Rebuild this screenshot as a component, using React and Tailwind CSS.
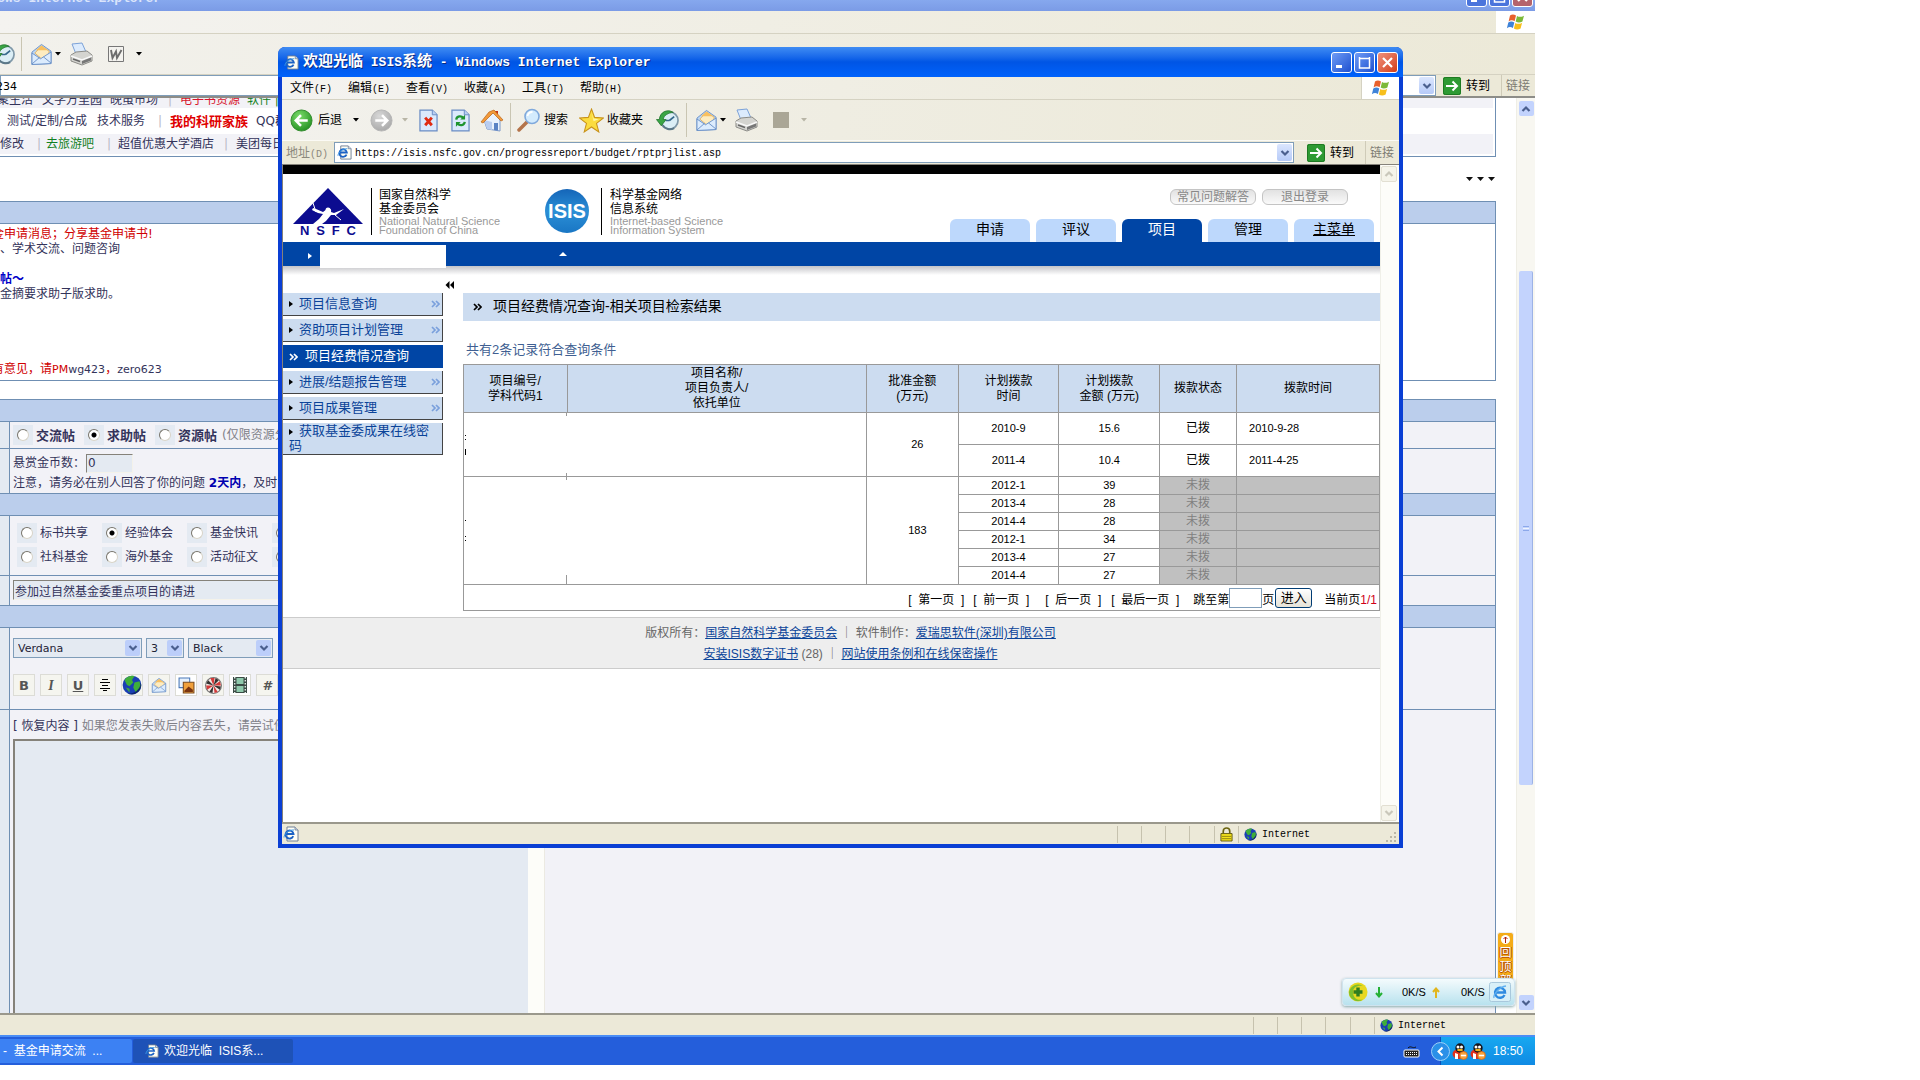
import React from "react";

const SANS = "font-['Liberation_Sans','Noto_Sans_CJK_SC',sans-serif]";
const MONO = "font-['Liberation_Mono','Noto_Sans_CJK_SC',monospace]";
const VERD = "font-['DejaVu_Sans','Noto_Sans_CJK_SC',sans-serif]";

/* ---------- icons ---------- */
const IePage = ({ className }) => (
  <svg viewBox="0 0 16 16" className={className} aria-hidden="true">
    <path d="M4 1h8l3 3v11H4z" fill="#fffef4" stroke="#6f7f95" />
    <path d="M12 1v3h3" fill="#cfd8e6" stroke="#6f7f95" strokeWidth=".8" />
    <path d="M10.2 10.2A4 4 0 1 1 10.5 8H3.4" fill="none" stroke="#1c62c4" strokeWidth="1.9" />
    <path d="M1 11.5C1 8 6 3.5 11 4" fill="none" stroke="#3d9be8" strokeWidth="1" />
  </svg>
);
const Flag = ({ className }) => (
  <svg viewBox="0 0 20 18" className={className} aria-hidden="true">
    <path d="M4 2.5c2-1.4 4-1.3 6 0L8.6 8.2c-2-1.2-4-1.2-6 .2z" fill="#e8602c" />
    <path d="M11 3c2 1.2 4.400 1.200 7-.3l-1.600 5.800c-2.400 1.500-4.600 1.400-6.700.1z" fill="#7cb938" />
    <path d="M2.300 9.500c2-1.400 4-1.300 6-.1L6.900 15c-2-1.200-4-1.200-6 .2z" fill="#3f83d8" />
    <path d="M9.300 10c2 1.200 4.400 1.200 6.800-.3L14.600 15.500c-2.400 1.500-4.600 1.400-6.700.1z" fill="#f7bf1c" />
  </svg>
);
const BackIcon = ({ off }) => (
  <svg viewBox="0 0 24 24" className="size-[23px] shrink-0" aria-hidden="true">
    <defs>
      <radialGradient id={off ? "gOff" : "gOn"} cx=".4" cy=".3" r=".8">
        <stop offset="0" stopColor={off ? "#d8d8d8" : "#7bdc6a"} />
        <stop offset="1" stopColor={off ? "#a4a4a4" : "#1c8a1c"} />
      </radialGradient>
    </defs>
    <circle cx="12" cy="12" r="11" fill={off ? "url(#gOff)" : "url(#gOn)"} stroke={off ? "#b5b5b5" : "#2f8a2b"} />
    <path d={off ? "M5.500 12h12M12.500 6.500l5.500 5.500-5.500 5.500" : "M18.500 12h-12M11.500 6.500L6 12l5.500 5.500"} fill="none" stroke="#fff" strokeWidth="2.600" />
  </svg>
);
const PageIcon = ({ kind }) => (
  <svg viewBox="0 0 20 24" className="h-[23px] w-[19px] shrink-0" aria-hidden="true">
    <path d="M1 1h13l5 5v17H1z" fill="#dbe9fc" stroke="#6a8cc4" strokeWidth="1.300" />
    <path d="M14 1v5h5" fill="#b9cff2" stroke="#6a8cc4" />
    {kind === "stop" ? (
      <path d="M6.500 9l7 8M13.500 9l-7 8" stroke="#e02a12" strokeWidth="3" />
    ) : (
      <g fill="none" stroke="#1f9430" strokeWidth="2.400">
        <path d="M5.500 11c.5-4 5.500-4.500 7.500-1.500" />
        <path d="M14.500 13.500c-.5 4-5.500 4.500-7.500 1.500" />
        <path d="M14.800 6v5h-5zM5.200 18.500v-5h5z" fill="#1f9430" stroke="none" />
      </g>
    )}
  </svg>
);
const HomeIcon = () => (
  <svg viewBox="0 0 24 24" className="size-[24px] shrink-0" aria-hidden="true">
    <path d="M15 3h3v5h-3z" fill="#c7311a" />
    <path d="M4 12l3 9 13 2V12l-6-8z" fill="#e9f1fd" stroke="#7c98c8" />
    <path d="M4 12l3 9 5 1v-8z" fill="#b9cdf0" />
    <path d="M1 14L9 4l5-2 9 10-2 1-8-8-10 10z" fill="#f29a3a" stroke="#b9641a" strokeWidth=".7" />
    <path d="M14 15h4v7.500l-4-.5z" fill="#5a82c4" />
  </svg>
);
const SearchIcon = () => (
  <svg viewBox="0 0 24 24" className="size-[24px] shrink-0" aria-hidden="true">
    <path d="M2 22l8-8" stroke="#b4744a" strokeWidth="3.500" strokeLinecap="round" />
    <circle cx="15" cy="8.500" r="7" fill="#d3ebfd" stroke="#7fa9dc" strokeWidth="1.600" />
    <path d="M10.500 8a5 5 0 0 1 5-4" fill="none" stroke="#fff" strokeWidth="1.800" />
  </svg>
);
const StarIcon = () => (
  <svg viewBox="0 0 24 24" className="size-[25px] shrink-0" aria-hidden="true">
    <path d="M12 1l3 8 8.500.5-6.700 5.300L19 23l-7-4.800L5 23l2.200-8.200L.5 9.500 9 9z" fill="#fbdc3e" stroke="#c8921a" />
    <path d="M12 4l2 6 5 .8-5 2z" fill="#fff3a0" />
  </svg>
);
const HistoryIcon = () => (
  <svg viewBox="0 0 24 24" className="size-[23px] shrink-0" aria-hidden="true">
    <circle cx="14" cy="12" r="9" fill="#dbeef6" stroke="#7f98a8" strokeWidth="1.800" />
    <path d="M14 12l5-4M14 12h-4" stroke="#35688c" strokeWidth="1.800" />
    <path d="M18 3.500C12-.5 4 3 3.500 11H.5l5 6.500 5-6.500h-3C8 6.500 13 4 18 3.500z" fill="#3aa545" stroke="#1d7028" strokeWidth=".8" />
    <path d="M7 17a9 9 0 0 0 12 3" fill="none" stroke="#5c7888" strokeWidth="2" />
  </svg>
);
const MailIcon = ({ className }) => (
  <svg viewBox="0 0 22 24" className={className} aria-hidden="true">
    <path d="M1 10L11 2l10 7v13L1 23z" fill="#bcd8f6" stroke="#6d93c8" />
    <path d="M4 11l7-7 8 5-1 6-7 2z" fill="#fdecc0" stroke="#e0a850" strokeWidth=".8" />
    <path d="M5 8l6-5 7 5z" fill="#f8c060" />
    <path d="M1 11l9 6 11-7v12L1 23z" fill="#dcecfd" stroke="#6d93c8" />
    <path d="M1 22.500l8-7M21 21.500l-8-6.500" stroke="#6d93c8" />
  </svg>
);
const PrintIcon = () => (
  <svg viewBox="0 0 24 24" className="size-[24px] shrink-0" aria-hidden="true">
    <path d="M3 2l10-1 4 9-10 2z" fill="#dcebfd" stroke="#7ca2d8" />
    <path d="M2 13l5-3 11-1 5 4v6l-10 4-11-4z" fill="#d4d4d0" stroke="#8c8c88" />
    <path d="M2 14l11 4 10-4" fill="none" stroke="#f8f8f8" strokeWidth="1.400" />
    <path d="M13 19l9-3.500v3L13 22z" fill="#777" />
    <path d="M4 17l7 2.500" stroke="#666" strokeWidth="1.500" />
  </svg>
);
const WordIcon = () => (
  <svg viewBox="0 0 16 16" className="size-[16px] shrink-0" aria-hidden="true">
    <path d="M.5.5h15v15H.5z" fill="#f4f3ef" stroke="#777" />
    <path d="M3 4l1.500 8L8 5.500 9 12l4.500-8" fill="none" stroke="#6d6d6d" strokeWidth="1.900" />
  </svg>
);
const Caret = ({ light }) => (
  <svg viewBox="0 0 6 4" className="h-[4px] w-[6px] shrink-0" aria-hidden="true">
    <path d="M0 0h6L3 3.500z" fill={light ? "#b8b5a6" : "#000"} />
  </svg>
);
const Globe = ({ className }) => (
  <svg viewBox="0 0 16 16" className={className} aria-hidden="true">
    <circle cx="8" cy="8" r="7.500" fill="#1a3fb4" />
    <path d="M2 4c2-3 6-4 8-3l-2 3 1 2-3 3-2-1zM10 6l4-1 1 4-4 5-2-4zM3 10l3 1v3z" fill="#3fae3a" />
    <path d="M15 6a7.500 7.500 0 0 1-11 8.500A9 9 0 0 0 15 6z" fill="#0b1c50" opacity=".7" />
  </svg>
);
const GoIcon = () => (
  <svg viewBox="0 0 18 18" className="size-[18px] shrink-0" aria-hidden="true">
    <rect width="18" height="18" rx="2" fill="#2e9a33" />
    <rect x=".5" y=".5" width="17" height="17" rx="2" fill="none" stroke="#1e7a22" />
    <path d="M3 9h11M9.500 4.500L14 9l-4.500 4.500" fill="none" stroke="#fff" strokeWidth="2" />
  </svg>
);
const Chev = ({ d, color }) => (
  <svg viewBox="0 0 10 8" className="h-[8px] w-[10px]" aria-hidden="true">
    <path d={d === "up" ? "M1.500 6L5 2.500 8.500 6" : "M1.500 2L5 5.500 8.500 2"} fill="none" stroke={color || "#4a5f8e"} strokeWidth="2.200" />
  </svg>
);
const Raquo = ({ color, left }) => (
  <svg viewBox="0 0 9 8" className="h-[8px] w-[9px] shrink-0" aria-hidden="true">
    {left ? (
      <path d="M4.500 0v8L.5 4zM9 0v8L5 4z" fill={color} />
    ) : (
      <path d="M1 1l3 3-3 3M5 1l3 3-3 3" fill="none" stroke={color} strokeWidth="1.700" />
    )}
  </svg>
);
const Tri = ({ color }) => (
  <svg viewBox="0 0 4 6" className="inline-block h-[6px] w-[4px] shrink-0" aria-hidden="true">
    <path d="M0 0v6l4-3z" fill={color} />
  </svg>
);
const Penguin = () => (
  <svg viewBox="0 0 16 17" className="h-[17px] w-[16px]" aria-hidden="true">
    <ellipse cx="7" cy="11" rx="6.500" ry="5" fill="#e0301c" />
    <circle cx="8" cy="5" r="4.700" fill="#15151c" />
    <circle cx="6" cy="4" r="1.500" fill="#fff" />
    <circle cx="9.500" cy="4" r="1.500" fill="#fff" />
    <ellipse cx="8" cy="7" rx="3" ry="1.200" fill="#f5b31c" />
    <path d="M3 10l3 1v5H3z" fill="#fff" />
    <circle cx="11.500" cy="12.500" r="4" fill="#f7a23a" stroke="#c8621a" strokeWidth=".7" />
    <path d="M9 12.500h5" stroke="#fff" strokeWidth="1.600" />
  </svg>
);
const NsfcMark = () => (
  <svg viewBox="0 0 70 36" className="h-[36px] w-[70px]" aria-hidden="true">
    <path d="M35 0L70 36H0z" fill="#0c0c90" />
    <path d="M20 20l3 1 7 3 4-3c2-2 5 0 4 3l3 1 10-4-8 6-5 0-5 6-4 3h-9l6-5 4-5-5-1-6-3z" fill="#fff" />
    <path d="M20 15l3 9M42 27l6 5" stroke="#fff" />
    <circle cx="35" cy="22" r="2.500" fill="#fff" />
  </svg>
);

/* ---------- browser chrome ---------- */
function WinButton({ kind, dim, label }) {
  const red = kind === "close";
  return (
    <button
      type="button"
      aria-label={label}
      className={
        "flex h-[21px] w-[21px] items-center justify-center rounded-[3px] border border-white " +
        (red
          ? dim ? "bg-[#b5636b]" : "bg-linear-to-br from-[#f0907a] to-[#d03a10]"
          : dim ? "bg-[#4a74dc]" : "bg-linear-to-br from-[#6f9bf5] to-[#1f4fd0]")
      }
    >
      <svg viewBox="0 0 13 13" className="size-[13px]" fill="none" stroke="#fff" aria-hidden="true">
        {kind === "min" && <path d="M1 10.500h6" strokeWidth="3" />}
        {kind === "max" && <path d="M1.500 1v11h10V1M.8 2.500h11.400" strokeWidth="1.500" />}
        {kind === "close" && <path d="M2 2l9 9M11 2l-9 9" strokeWidth="2.200" />}
      </svg>
    </button>
  );
}
function WinButtons({ dim }) {
  return (
    <div className="flex gap-[2px]">
      <WinButton kind="min" dim={dim} label="最小化" />
      <WinButton kind="max" dim={dim} label="最大化" />
      <WinButton kind="close" dim={dim} label="关闭" />
    </div>
  );
}
const Sep = ({ className }) => <span className={"h-[34px] w-px shrink-0 bg-[#c9c5b2] " + (className || "")} />;

function AddressTail() {
  return (
    <>
      <button type="button" className="flex h-full w-[63px] shrink-0 items-center gap-[5px] pl-[7px] text-[12px] text-black">
        <GoIcon />
        转到
      </button>
      <span className="ml-[2px] h-full w-px shrink-0 bg-[#cfcbb8]" />
      <span className="w-[33px] shrink-0 pl-[4px] text-[12px] text-[#7d7b72]">链接</span>
    </>
  );
}
function AddressBox({ children }) {
  return (
    <div className="flex h-[21px] min-w-0 flex-1 items-center border border-[#7f9db9] bg-white">
      {children}
      <button type="button" aria-label="地址列表" className="mr-px flex h-[17px] w-[15px] shrink-0 items-center justify-center rounded-[2px] bg-linear-to-b from-[#dbe6fe] to-[#b6caf8]">
        <Chev d="down" />
      </button>
    </div>
  );
}
function StatusCells({ lock }) {
  return (
    <>
      {[0, 1, 2].map((i) => (
        <span key={i} className="h-[17px] w-[24px] border-l border-[#c6c2ae]" />
      ))}
      <span className="h-[17px] w-[25px] border-l border-[#c6c2ae]" />
      <span className="flex h-[17px] w-[24px] items-center justify-center border-l border-[#c6c2ae]">
        {lock && (
          <svg viewBox="0 0 14 16" className="h-[15px] w-[13px]" aria-hidden="true">
            <path d="M3.500 7V4.500a3.500 3.500 0 0 1 7 0V7" fill="none" stroke="#6b6410" strokeWidth="1.800" />
            <path d="M1 7h12v8H1z" fill="#f4e21c" stroke="#5c5410" />
            <path d="M2 10h10M2 12.500h10" stroke="#8c8210" />
          </svg>
        )}
      </span>
      <span className="flex h-[17px] items-center gap-[5px] border-l border-[#c6c2ae] pl-[5px]">
        <Globe className="size-[13px]" />
        <span className={"text-[10px] text-black " + MONO}>Internet</span>
      </span>
    </>
  );
}

/* ---------- background forum page ---------- */
const Bar = () => <span className="text-[#b9b9c4]">|</span>;

function Radio({ name, label, checked, bold, className }) {
  return (
    <label className={"flex items-center gap-[3px] whitespace-nowrap " + className}>
      <span className="flex size-[20px] shrink-0 items-center justify-center bg-[#e4eaf2]">
        <input
          type="radio"
          name={name}
          defaultChecked={checked}
          className="size-[12px] appearance-none rounded-full border border-[#d8d4c8] border-t-[#77746a] border-l-[#77746a] bg-white checked:bg-[radial-gradient(circle,#000_2px,#fff_3px)]"
        />
      </span>
      <span className={bold ? "text-[13px] font-bold" : ""}>{label}</span>
    </label>
  );
}
function FormRow({ className, children }) {
  return (
    <div className={"flex border-t border-[#6f8fb3] " + className}>
      <div className="w-[9px] shrink-0 bg-[#e4eaf2]" />
      <div className="min-w-0 flex-1 border-l border-[#6f8fb3] bg-[#f2f2f7] pl-[3px]">{children}</div>
    </div>
  );
}
const HeadRow = () => <div className="h-[22px] border-t border-[#6f8fb3] bg-[#bbceec]" />;

function Pick({ label, value, className }) {
  return (
    <span className={"relative h-[20px] border border-[#7f9db9] bg-[#e4eaf2] " + className}>
      <select aria-label={label} defaultValue={value} className="h-full w-full appearance-none pl-[4px] text-[11px] text-[#1f2336]">
        <option>{value}</option>
      </select>
      <span className="pointer-events-none absolute top-px right-px flex h-[16px] w-[15px] items-center justify-center rounded-[2px] bg-[#bccefa]">
        <Chev d="down" />
      </span>
    </span>
  );
}
function EditorButton({ label, children, on }) {
  return (
    <button type="button" aria-label={label} className={"flex size-[22px] shrink-0 items-center justify-center border border-[#dcdcd6] text-[#555] " + (on ? "bg-white" : "bg-[#f5f5ef]")}>
      {children}
    </button>
  );
}
function EditorBar() {
  return (
    <div className="mt-[16px] flex gap-[5px]">
      <EditorButton label="粗体"><b className="text-[13px]">B</b></EditorButton>
      <EditorButton label="斜体"><b className="font-['Liberation_Serif',serif] text-[14px] italic">I</b></EditorButton>
      <EditorButton label="下划线"><b className="text-[13px] underline">U</b></EditorButton>
      <EditorButton label="居中">
        <svg viewBox="0 0 12 12" className="size-[12px]" stroke="#000" aria-hidden="true"><path d="M3 .5h6M1 3.500h10M3 6.500h6M1 9.500h10M4 11.500h4" /></svg>
      </EditorButton>
      <EditorButton label="链接"><Globe className="size-[20px]" /></EditorButton>
      <EditorButton label="邮件"><MailIcon className="size-[16px]" /></EditorButton>
      <EditorButton label="图片" on>
        <svg viewBox="0 0 16 16" className="size-[17px]" aria-hidden="true">
          <path d="M1 1h10v9H1z" fill="#e6f0fc" stroke="#4a78b8" />
          <path d="M5 5h10v10H5z" fill="#f0a03c" stroke="#7a4a1c" />
          <path d="M6 13l4-4 4 3v2H6z" fill="#7a3410" />
        </svg>
      </EditorButton>
      <EditorButton label="动画">
        <svg viewBox="0 0 16 16" className="size-[17px]" aria-hidden="true">
          <circle cx="8" cy="8" r="7.500" fill="#f4e8e4" stroke="#777" />
          <path d="M8 8L5 1h4zM8 8l6-4 1 4zM8 8l4 6-3 1zM8 8l-6 4-1-4z" fill="#d43a3a" />
          <path d="M8 8l2-7 3 2zM8 8l7 1-1 3zM8 8l-1 7-3-1zM8 8L1 6l2-3z" fill="#333" />
        </svg>
      </EditorButton>
      <EditorButton label="视频" on>
        <svg viewBox="0 0 14 16" className="h-[16px] w-[14px]" aria-hidden="true">
          <path d="M0 0h14v16H0z" fill="#3a4a44" />
          <path d="M3.500 1h7v6h-7zM3.500 9h7v6h-7z" fill="#8fc9ac" />
          <path d="M1.700 0v16M12.300 0v16" stroke="#dfe8e4" strokeWidth="1.400" strokeDasharray="1.500 1.500" />
        </svg>
      </EditorButton>
      <EditorButton label="代码"><b className="text-[13px] italic">#</b></EditorButton>
    </div>
  );
}

function ForumPage() {
  const topics = [
    ["标书共享", "经验体会", "基金快讯", "项目合作"],
    ["社科基金", "海外基金", "活动征文", "其他"],
  ];
  return (
    <div className={"flex min-w-0 flex-1 flex-col bg-white pr-[20px] text-[12px] leading-[15px] whitespace-nowrap text-[#33335a] " + VERD}>
      <div className="flex flex-col border-r border-b border-[#6f8fb3] pr-[2px] pb-[2px]">
        <div className="flex h-[10px] items-end overflow-hidden bg-[#f2f2f7]">
          <span className="-ml-[3px] w-[45px]">聚生活</span>
          <span className="w-[68px]">文学万里园</span>
          <span className="w-[58px]">晚虽市场</span>
          <span className="w-[12px]"><Bar /></span>
          <span className="w-[67px] text-[#d8142c]">电子书资源</span>
          <span className="text-[#118022]">软件 |</span>
        </div>
        <div className="flex h-[26px] items-center">
          <span className="ml-[7px] w-[90px]">测试/定制/合成</span>
          <span className="w-[61px]">技术服务</span>
          <span className="w-[12px]"><Bar /></span>
          <a href="#family" className="w-[86px] text-[13px] font-bold text-[#e00000]">我的科研家族</a>
          <span>QQ群</span>
        </div>
        <div className="flex h-[20px] items-center bg-[#f2f2f7]">
          <span className="w-[37px]">修改</span>
          <span className="w-[9px]"><Bar /></span>
          <a href="#travel" className="w-[61px] text-[#118022]">去旅游吧</a>
          <span className="w-[11px]"><Bar /></span>
          <span className="w-[106px]">超值优惠大学酒店</span>
          <span className="w-[12px]"><Bar /></span>
          <span>美团每日</span>
        </div>
      </div>

      <div className="flex h-[44px] items-center justify-end gap-[4px] pr-[1px]">
        {[0, 1, 2].map((i) => (
          <svg key={i} viewBox="0 0 7 4" className="h-[4px] w-[7px]" aria-hidden="true"><path d="M0 0h7L3.500 4z" fill="#111" /></svg>
        ))}
      </div>

      <div className="border border-l-0 border-[#6f8fb3]">
        <div className="h-[22px] border-b border-[#6f8fb3] bg-[#bbceec]" />
        <div className="h-[156px] pt-[3px]">
          <p className="-ml-[8px] text-[#d00000]">金申请消息；分享基金申请书!</p>
          <p>、学术交流、问题咨询</p>
          <p className="mt-[15px] font-bold text-[#0000c8]">帖～</p>
          <p>金摘要求助子版求助。</p>
          <p className="mt-[60px] -ml-[8px] text-[11px]"><span className="text-[12px] text-[#d00000]">有意见，请</span><span className="text-[#d00000]">PM</span>wg423<span className="text-[12px] text-[#d00000]">，</span>zero623</p>
        </div>
      </div>

      <div className="mt-[18px] flex flex-1 flex-col border-r border-[#6f8fb3]">
        <HeadRow />
        <FormRow className="h-[27px]">
          <div className="flex h-full items-center">
            <Radio name="kind" label="交流帖" bold className="w-[71px]" />
            <Radio name="kind" label="求助帖" bold checked className="w-[71px]" />
            <Radio name="kind" label="资源帖" bold className="w-[67px]" />
            <span className="text-[#808088]">(仅限资源分享)</span>
          </div>
        </FormRow>
        <FormRow className="h-[45px]">
          <label className="mt-[4px] flex h-[20px] items-center">
            <span className="w-[73px]">悬赏金币数：</span>
            <input defaultValue="0" className="h-[19px] w-[47px] border border-[#f4f2ea] border-t-[#85827a] border-l-[#85827a] bg-[#e4eaf2] px-px" />
          </label>
          <p className="mt-[3px]">注意，请务必在别人回答了你的问题 <b className="text-[#0000b0]">2天内</b>，及时</p>
        </FormRow>
        <HeadRow />
        <FormRow className="h-[60px]">
          <div className="flex flex-col gap-[4px] pt-[7px] pl-[4px]">
            {topics.map((row, r) => (
              <div key={r} className="flex h-[20px]">
                {row.map((t, i) => (
                  <Radio key={t} name="topic" label={t} checked={r === 0 && i === 1} className="w-[85px]" />
                ))}
              </div>
            ))}
          </div>
        </FormRow>
        <FormRow className="h-[30px]">
          <input aria-label="标题" defaultValue="参加过自然基金委重点项目的请进" className="mt-[4px] block h-[20px] w-[520px] border border-[#f4f2ea] border-t-[#85827a] border-l-[#85827a] bg-[#e4eaf2] px-px" />
        </FormRow>
        <HeadRow />
        <FormRow className="h-[82px]">
          <div className="mt-[10px] flex gap-[4px]">
            <Pick label="字体" value="Verdana" className="w-[129px]" />
            <Pick label="字号" value="3" className="w-[38px]" />
            <Pick label="颜色" value="Black" className="w-[85px]" />
          </div>
          <EditorBar />
        </FormRow>
        <FormRow className="flex-1">
          <div className="flex h-full flex-col">
            <p className="h-[29px] pt-[9px]">[ 恢复内容 ] <span className="text-[#808088]">如果您发表失败后内容丢失，请尝试使用</span></p>
            <div className="flex flex-1">
              <textarea aria-label="内容" className="w-[515px] resize-none border-t-2 border-l-2 border-[#85827a] bg-[#e4eaf2]" />
              <div className="w-[17px] border-r border-[#eceae2] bg-[#fdfdf9]" />
            </div>
          </div>
        </FormRow>
      </div>
    </div>
  );
}

function BackgroundWindow() {
  return (
    <div className="flex flex-1 flex-col">
      <div className="flex h-[11px] justify-between overflow-hidden bg-linear-to-b from-[#86a8ee] to-[#7b9be6]">
        <div className={"-mt-[8px] -ml-[34px] text-[13px] leading-[14px] font-bold text-[#dbe5fb] " + MONO}>Windows Internet Explorer</div>
        <div className="-mt-[14px] pr-[2px]"><WinButtons dim /></div>
      </div>
      <div className="flex h-[22px] justify-end bg-linear-to-r from-[#f4f3f0] to-[#ece9d8]">
        <span className="flex w-[39px] items-center justify-center bg-white"><Flag className="h-[18px] w-[20px]" /></span>
      </div>
      <div className="flex h-[41px] items-center border-t border-[#d5d2c2] bg-linear-to-r from-[#f2f1ec] to-[#ece9d8]">
        <span className="-ml-[8px]"><HistoryIcon /></span>
        <Sep className="ml-[6px]" />
        <MailIcon className="ml-[9px] h-[24px] w-[21px]" />
        <span className="ml-[3px]"><Caret /></span>
        <span className="ml-[8px]"><PrintIcon /></span>
        <span className="ml-[15px]"><WordIcon /></span>
        <span className="ml-[12px]"><Caret /></span>
      </div>
      <div className="flex h-[24px] items-center border-t border-b-2 border-t-[#d5d2c2] border-b-[#8d8d88] bg-[#ece9d8]">
        <AddressBox>
          <input aria-label="网址" defaultValue="234" className={"-ml-[5px] min-w-0 flex-1 pt-[4px] text-[11px] text-black " + VERD} />
        </AddressBox>
        <AddressTail />
      </div>
      <div className="flex flex-1">
        <ForumPage />
        <div className="flex w-[19px] flex-col items-center border-l border-[#efeee6] bg-[#f8f7f1] py-[3px]">
          <button type="button" aria-label="向上滚动" className="flex size-[15px] items-center justify-center rounded-[2px] bg-[#c3d3fd]"><Chev d="up" /></button>
          <div className="mt-[155px] flex h-[514px] w-[14px] flex-col items-center justify-center gap-px rounded-[2px] border-r border-[#9db3e6] bg-[#c3d3fd]">
            <span className="h-px w-[6px] bg-[#8ca8ea]" />
            <span className="h-px w-[6px] bg-[#eef4fe]" />
            <span className="h-px w-[6px] bg-[#8ca8ea]" />
          </div>
          <button type="button" aria-label="向下滚动" className="mt-auto flex size-[15px] items-center justify-center rounded-[2px] bg-[#c3d3fd]"><Chev d="down" /></button>
        </div>
      </div>
      <div className="flex h-[22px] items-center border-t-2 border-[#9a988c] bg-[#ece9d8]">
        <div className="flex-1" />
        <StatusCells />
        <span className="w-[89px]" />
      </div>
    </div>
  );
}

/* ---------- foreground window ---------- */
const MENU = [["文件", "F"], ["编辑", "E"], ["查看", "V"], ["收藏", "A"], ["工具", "T"], ["帮助", "H"]];

function SiteHeader() {
  const tabs = ["申请", "评议", "项目", "管理", "主菜单"];
  return (
    <header>
      <div className="h-[9px] bg-black" />
      <div className="flex h-[68px] justify-between">
        <div className="flex pl-[10px]">
          <div className="mt-[14px] w-[70px]">
            <NsfcMark />
            <div className="flex justify-between px-[7px] text-[13px] leading-[13px] font-bold text-[#0c0c90]"><span>N</span><span>S</span><span>F</span><span>C</span></div>
          </div>
          <div className="mt-[14px] ml-[8px] h-[47px] w-[168px] border-l border-black pl-[7px] text-[12px] leading-[14px] whitespace-nowrap text-black">
            <p>国家自然科学</p>
            <p>基金委员会</p>
            <p className="mt-px text-[11px] leading-[9px] text-[#999]">National Natural Science<br />Foundation of China</p>
          </div>
          <div className="mt-[15px] ml-[6px] flex h-[44px] w-[44px] items-center justify-center rounded-full bg-linear-to-b from-[#1565b8] via-[#2b8fd6] to-[#1976c4] text-[20px] font-bold text-white">ISIS</div>
          <div className="mt-[14px] ml-[12px] h-[47px] border-l border-black pl-[8px] text-[12px] leading-[14px] whitespace-nowrap text-black">
            <p>科学基金网络</p>
            <p>信息系统</p>
            <p className="mt-px text-[11px] leading-[9px] text-[#999]">Internet-based Science<br />Information System</p>
          </div>
        </div>
        <div className="flex flex-col items-end justify-between pt-[15px] pr-[6px]">
          <div className="flex gap-[6px] pr-[26px]">
            {["常见问题解答", "退出登录"].map((t) => (
              <button key={t} type="button" className="h-[16px] w-[86px] rounded-[6px] border border-[#c4c4c4] bg-linear-to-b from-[#e2e2e2] to-[#fafafa] text-[12px] leading-[14px] text-[#888]">{t}</button>
            ))}
          </div>
          <nav className="flex gap-[6px] text-[14px] leading-[20px] text-black">
            {tabs.map((t) => (
              <a key={t} href="#tab" className={"h-[23px] w-[80px] rounded-t-[6px] text-center " + (t === "项目" ? "bg-[#0045a5] text-white" : "bg-[#bdd8fc]") + (t === "主菜单" ? " underline" : "")}>{t}</a>
            ))}
          </nav>
        </div>
      </div>
      <div className="flex h-[24px] bg-[#0045a5]">
        <span className="mt-[5px] ml-[25px] leading-none"><Tri color="#fff" /></span>
        <span className="mt-[3px] ml-[8px] h-[23px] w-[126px] bg-white" />
        <svg viewBox="0 0 8 4" className="mt-[10px] ml-[113px] h-[4px] w-[8px]" aria-hidden="true"><path d="M0 4h8L4 0z" fill="#fff" /></svg>
      </div>
      <div className="h-[9px] bg-linear-to-b from-[#c4c4c8] to-white" />
    </header>
  );
}

function SideMenu() {
  const items = ["项目信息查询", "资助项目计划管理", "项目经费情况查询", "进展/结题报告管理", "项目成果管理", "获取基金委成果在线密码"];
  return (
    <nav className="flex w-[160px] shrink-0 flex-col gap-[3px] pt-[18px] text-[13px] leading-[20px] text-[#0b4499]">
      {items.map((t, i) => {
        if (i === 2)
          return (
            <a key={t} href="#m" className="flex h-[23px] items-center gap-[7px] bg-[#0045a5] pl-[6px] text-white">
              <Raquo color="#fff" /><span className="pb-[2px]">{t}</span>
            </a>
          );
        if (i === 5)
          return (
            <a key={t} href="#m" className="h-[32px] border-r border-b border-[#444] bg-[#ccdcf0] pr-[12px] pl-[6px] leading-[15px]">
              <span className="mr-[6px] inline-block"><Tri color="#000" /></span>{t}
            </a>
          );
        return (
          <a key={t} href="#m" className="flex h-[23px] items-center border-r border-b border-[#444] bg-[#ccdcf0] pr-[2px] pl-[6px]">
            <Tri color="#000" /><span className="ml-[6px] flex-1 pb-px">{t}</span><Raquo color="#7aa0dc" />
          </a>
        );
      })}
    </nav>
  );
}

const GROUPS = [
  { total: "26", h: "h-[32px]", rows: [["2010-9", "15.6", "2010-9-28"], ["2011-4", "10.4", "2011-4-25"]] },
  { total: "183", h: "h-[18px]", rows: [["2012-1", "39"], ["2013-4", "28"], ["2014-4", "28"], ["2012-1", "34"], ["2013-4", "27"], ["2014-4", "27"]] },
];

function ResultTable() {
  const th = "border border-[#999] p-0 font-normal";
  const td = "border border-[#999] p-0 text-center";
  return (
    <table className="w-full table-fixed border-collapse text-[12px] leading-[15px] text-black">
      <colgroup>
        <col className="w-[11.3%]" /><col className="w-[32.7%]" /><col className="w-[10%]" /><col className="w-[11%]" />
        <col className="w-[11%]" /><col className="w-[8.4%]" /><col />
      </colgroup>
      <thead>
        <tr className="h-[48px] bg-[#ccdcf0]">
          <th className={th}>项目编号/<br />学科代码1</th>
          <th className={th}>项目名称/<br />项目负责人/<br />依托单位</th>
          <th className={th}>批准金额<br />(万元)</th>
          <th className={th}>计划拨款<br />时间</th>
          <th className={th}>计划拨款<br />金额 (万元)</th>
          <th className={th}>拨款状态</th>
          <th className={th}>拨款时间</th>
        </tr>
      </thead>
      <tbody>
        {GROUPS.map((g, gi) =>
          g.rows.map((r, i) => (
            <tr key={gi + "-" + i} className={g.h}>
              {i === 0 && (
                <>
                  <td rowSpan={g.rows.length} className="relative border-y border-l border-[#999] p-0 align-middle">
                    <span className="absolute top-0 right-0 h-[3px] w-px bg-[#999]" />
                    <span className={"absolute right-0 bottom-0 w-px bg-[#999] " + (gi ? "h-[9px]" : "h-[3px]")} />
                    <span className="flex flex-col gap-[9px] pl-px">
                      <span className={gi ? "h-px w-px bg-black" : "flex h-[5px] w-px flex-col justify-between"}>
                        {!gi && <><i className="h-px w-px bg-black" /><i className="h-px w-px bg-black" /></>}
                      </span>
                      <span className={gi ? "mt-[6px] flex h-[5px] w-px flex-col justify-between" : "h-[6px] w-px bg-black"}>
                        {gi === 1 && <><i className="h-px w-px bg-black" /><i className="h-px w-px bg-black" /></>}
                      </span>
                    </span>
                  </td>
                  <td rowSpan={g.rows.length} className="border-y border-r border-[#999] p-0" />
                  <td rowSpan={g.rows.length} className="border border-[#999] p-0 pl-[10px] text-center text-[11px]">{g.total}</td>
                </>
              )}
              <td className={td + " text-[11px]"}>{r[0]}</td>
              <td className={td + " text-[11px]"}>{r[1]}</td>
              <td className={td + (gi ? " bg-[#c0c0c0] text-[#808080]" : "")}>{gi ? "未拨" : "已拨"}</td>
              <td className={"border border-[#999] p-0 pl-[12px] text-[11px]" + (gi ? " bg-[#c0c0c0]" : "")}>{r[2]}</td>
            </tr>
          ))
        )}
      </tbody>
      <tfoot>
        <tr className="h-[26px]">
          <td colSpan={7} className="border border-[#999] p-0">
            <div className="flex items-end justify-end pr-[2px] whitespace-nowrap">
              <a href="#p" className="w-[65px]">[ &nbsp;第一页 &nbsp;]</a>
              <a href="#p" className="w-[72px]">[ &nbsp;前一页 &nbsp;]</a>
              <a href="#p" className="w-[66px]">[ &nbsp;后一页 &nbsp;]</a>
              <a href="#p" className="w-[82px]">[ &nbsp;最后一页 &nbsp;]</a>
              <label className="flex items-end">跳至第<input aria-label="页码" className="h-[20px] w-[33px] border border-[#7f9db9] bg-white" />页</label>
              <button type="button" className="ml-px h-[20px] w-[37px] self-start rounded-[3px] border border-[#003c74] bg-linear-to-b from-white to-[#e6e3d8] text-[13px] leading-[15px]">进入</button>
              <span className="ml-[12px]">当前页<span className="text-[#d00018]">1/1</span></span>
            </div>
          </td>
        </tr>
      </tfoot>
    </table>
  );
}

function ForegroundWindow() {
  return (
    <section className="absolute top-[47px] right-[132px] bottom-[217px] left-[278px] flex flex-col rounded-t-[7px] border-x-4 border-b-4 border-[#0a3fd4] bg-[#0a3fd4]">
      <div className="-mx-[4px] flex h-[30px] shrink-0 items-center rounded-t-[7px] bg-linear-to-b from-[#3f8cf3] via-[#0055e5] to-[#0062fb] pr-[5px] pl-[6px]">
        <IePage className="size-[15px]" />
        <h1 className={"ml-[4px] flex-1 pt-[2px] text-[13px] leading-[20px] font-bold whitespace-nowrap text-white [text-shadow:1px_1px_0_#0a2a80] " + MONO}>
          <span className="text-[15px]">欢迎光临</span> ISIS<span className="text-[15px]">系统</span> - Windows Internet Explorer
        </h1>
        <WinButtons />
      </div>
      <div className="flex h-[22px] shrink-0 items-center bg-linear-to-r from-[#f4f3f0] to-[#ece9d8] pl-[8px] text-[12px] text-black">
        {MENU.map(([t, k]) => (
          <button key={k} type="button" className="w-[58px] text-left">{t}<span className={"text-[10px] " + MONO}>({k})</span></button>
        ))}
        <span className="ml-auto flex h-full w-[38px] items-center justify-center border-l border-[#d5d2c2] bg-white"><Flag className="h-[18px] w-[20px]" /></span>
      </div>
      <div className="flex h-[41px] shrink-0 items-center border-t border-[#d5d2c2] bg-linear-to-r from-[#f2f1ec] to-[#ece9d8] pl-[8px] text-[12px] text-black">
        <button type="button" className="flex w-[80px] items-center gap-[5px]"><BackIcon />后退<span className="ml-[6px]"><Caret /></span></button>
        <button type="button" aria-label="前进" className="flex w-[49px] items-center gap-[9px]"><BackIcon off /><Caret light /></button>
        <button type="button" aria-label="停止" className="w-[32px]"><PageIcon kind="stop" /></button>
        <button type="button" aria-label="刷新" className="w-[29px]"><PageIcon kind="refresh" /></button>
        <button type="button" aria-label="主页" className="w-[30px]"><HomeIcon /></button>
        <Sep />
        <button type="button" className="ml-[6px] flex w-[62px] items-center gap-[3px]"><SearchIcon />搜索</button>
        <button type="button" className="flex w-[77px] items-center gap-[3px]"><StarIcon />收藏夹</button>
        <button type="button" aria-label="历史" className="w-[30px]"><HistoryIcon /></button>
        <Sep />
        <button type="button" aria-label="邮件" className="ml-[9px] flex w-[38px] items-center gap-[3px]"><MailIcon className="h-[24px] w-[21px]" /><Caret /></button>
        <button type="button" aria-label="打印" className="w-[39px]"><PrintIcon /></button>
        <span className="size-[16px] bg-[#aaa696]" />
        <span className="ml-[12px]"><Caret light /></span>
      </div>
      <div className="flex h-[24px] shrink-0 items-center border-t border-[#fbfaf5] bg-[#ece9d8]">
        <label htmlFor="addr" className="w-[52px] shrink-0 pl-[4px] text-[12px] whitespace-nowrap text-[#8b887c]">地址<span className={"text-[10px] " + MONO}>(D)</span></label>
        <AddressBox>
          <IePage className="ml-[2px] size-[15px] shrink-0" />
          <input id="addr" defaultValue="https://isis.nsfc.gov.cn/progressreport/budget/rptprjlist.asp" className={"min-w-0 flex-1 pt-px pl-[3px] text-[10px] text-black " + MONO} />
        </AddressBox>
        <span className="w-[6px]" />
        <AddressTail />
      </div>
      <div className="flex min-h-0 flex-1 border-t border-l border-[#85827a] bg-white">
        <main className="min-w-0 flex-1">
          <SiteHeader />
          <div className="flex">
            <SideMenu />
            <span className="mt-[6px] ml-[2px] h-[8px] w-[18px] shrink-0"><Raquo left color="#000" /></span>
            <div className="min-w-0 flex-1 pt-[18px]">
              <h2 className="flex h-[28px] items-center gap-[11px] bg-[#ccdcf0] pl-[10px] text-[14px] leading-[20px] text-black"><Raquo color="#000" /><span className="pb-[2px]">项目经费情况查询-相关项目检索结果</span></h2>
              <p className="mt-[19px] mb-[4px] pl-[3px] text-[13px] leading-[20px] text-[#3f5f92]">共有2条记录符合查询条件</p>
              <ResultTable />
            </div>
          </div>
          <footer className="mt-[6px] h-[52px] border-y border-[#ccc] bg-[#eee] pt-[5px] pl-[38px] text-center text-[12px] leading-[21px] text-[#666]">
            <p>版权所有：<a href="#f" className="text-[#0b4499] underline">国家自然科学基金委员会</a> ｜ 软件制作：<a href="#f" className="text-[#0b4499] underline">爱瑞思软件(深圳)有限公司</a></p>
            <p><a href="#f" className="text-[#0b4499] underline">安装ISIS数字证书</a> (28) ｜ <a href="#f" className="text-[#0b4499] underline">网站使用条例和在线保密操作</a></p>
          </footer>
        </main>
        <div className="flex w-[19px] flex-col justify-between border-l border-[#f0f0e8] bg-[#fdfdf9] py-px">
          <button type="button" disabled aria-label="向上滚动" className="flex size-[16px] items-center justify-center rounded-[2px] border border-[#e2dfd2] bg-[#f5f4ea]"><Chev d="up" color="#c9c7ba" /></button>
          <button type="button" disabled aria-label="向下滚动" className="flex size-[16px] items-center justify-center rounded-[2px] border border-[#e2dfd2] bg-[#f5f4ea]"><Chev d="down" color="#c9c7ba" /></button>
        </div>
      </div>
      <div className="flex h-[22px] shrink-0 items-center border-t-2 border-[#9a988c] bg-[#ece9d8]">
        <IePage className="ml-px size-[16px]" />
        <div className="flex-1" />
        <StatusCells lock />
        <span className="w-[76px]" />
        <svg viewBox="0 0 11 11" className="mt-[6px] mr-[2px] size-[11px]" fill="#bab7a6" aria-hidden="true">
          <path d="M8 0h2v2H8zM8 4h2v2H8zM4 4h2v2H4zM8 8h2v2H8zM4 8h2v2H4zM0 8h2v2H0z" />
        </svg>
      </div>
    </section>
  );
}

/* ---------- desktop extras ---------- */
function TopBadge() {
  return (
    <button type="button" className="absolute right-[21px] bottom-[80px] flex h-[53px] w-[17px] flex-col items-center overflow-hidden rounded-t-[3px] border border-[#eee] bg-[#f4ac18] text-[12px] leading-[14px] text-white [text-shadow:1px_0_0_#b85000,-1px_0_0_#b85000,0_1px_0_#b85000]">
      <span className="mt-[2px] mb-[2px] flex size-[9px] shrink-0 items-center justify-center rounded-full bg-white">
        <svg viewBox="0 0 7 7" className="size-[7px]" fill="none" stroke="#b02010" aria-hidden="true"><path d="M3.500 7V1M1.500 3l2-2 2 2" /></svg>
      </span>
      <span className="w-[12px] whitespace-normal">回顶部</span>
    </button>
  );
}
function SpeedBar() {
  return (
    <div className="absolute right-[20px] bottom-[59px] flex h-[28px] w-[173px] items-center rounded-[4px] border border-[#cfe3ee] bg-linear-to-b from-[#f4fbfd] to-[#b8e2ee] pl-[5px] text-[11px] text-black shadow-[0_1px_3px_#8aa]">
      <svg viewBox="0 0 20 20" className="size-[20px]" aria-hidden="true">
        <circle cx="10" cy="10" r="9.500" fill="#e8d820" />
        <path d="M1 10a9 9 0 0 0 14 7.500C8 19 5 15 5 10S10 3 15 4A9 9 0 0 0 1 10z" fill="#7fbf2c" />
        <path d="M10 5.500v9M5.500 10h9" stroke="#2f7d20" strokeWidth="3.400" />
      </svg>
      <svg viewBox="0 0 8 11" className="ml-[7px] h-[11px] w-[8px]" fill="none" stroke="#25b035" strokeWidth="2" aria-hidden="true"><path d="M4 0v9M1 6l3 3.500L7 6" /></svg>
      <span className="ml-[19px] w-[30px]">0K/S</span>
      <svg viewBox="0 0 8 11" className="h-[11px] w-[8px]" fill="none" stroke="#e2b51c" strokeWidth="2" aria-hidden="true"><path d="M4 11V2M1 5l3-3.500L7 5" /></svg>
      <span className="ml-[21px] w-[28px]">0K/S</span>
      <svg viewBox="0 0 22 20" className="h-[20px] w-[22px]" aria-hidden="true">
        <rect x=".5" y=".5" width="21" height="19" rx="2" fill="#d8f0f8" stroke="#a8c8dc" />
        <path d="M15.500 13a5 5 0 1 1 .5-2.500H7" fill="none" stroke="#2f8be0" strokeWidth="2.400" />
        <path d="M5 16C4 13 10 5 17 4" fill="none" stroke="#5fb0f0" strokeWidth="1.300" />
      </svg>
    </div>
  );
}
function Taskbar() {
  return (
    <div className="flex h-[30px] shrink-0 items-center border-t-2 border-[#4a8df5] bg-[#245edb] text-[12px] whitespace-nowrap text-white">
      <button type="button" className="h-[24px] w-[132px] rounded-r-[2px] bg-[#3c81f3] pl-[3px] text-left">-&nbsp; 基金申请交流 &nbsp;...</button>
      <button type="button" className="ml-px flex h-[24px] w-[160px] items-center gap-[5px] rounded-[2px] bg-[#1e52b7] pl-[12px]"><IePage className="size-[14px]" /><span>欢迎光临 &nbsp;ISIS系...</span></button>
      <div className="flex-1" />
      <svg viewBox="0 0 17 13" className="h-[13px] w-[17px]" aria-hidden="true">
        <path d="M5 3c3-3 4 1 8-1" fill="none" stroke="#111" />
        <rect x="1" y="5" width="15" height="7" rx="1" fill="#222" stroke="#fff" />
        <path d="M3 7.500h11M3 9.500h11" stroke="#fff" strokeDasharray="1 1" />
      </svg>
      <div className="ml-[20px] flex h-full w-[95px] items-center border-l border-[#0c4fb8] bg-linear-to-b from-[#18a8f0] to-[#108ae4]">
        <svg viewBox="0 0 19 19" className="-ml-[10px] size-[19px] shrink-0" aria-hidden="true">
          <circle cx="9.500" cy="9.500" r="9" fill="#2a90e8" stroke="#9cd0f8" />
          <path d="M11.500 5.500l-4 4 4 4" fill="none" stroke="#fff" strokeWidth="2" />
        </svg>
        <span className="ml-[2px] flex gap-[2px]"><Penguin /><Penguin /></span>
        <span className="ml-[7px] text-[12px]">18:50</span>
      </div>
    </div>
  );
}

export default function App() {
  return (
    <div className={"flex min-h-screen flex-col bg-white pb-[15px] " + SANS}>
      <div className="relative flex w-[calc(80%-1px)] flex-1 flex-col overflow-hidden">
        <BackgroundWindow />
        <Taskbar />
        <ForegroundWindow />
        <TopBadge />
        <SpeedBar />
      </div>
    </div>
  );
}
